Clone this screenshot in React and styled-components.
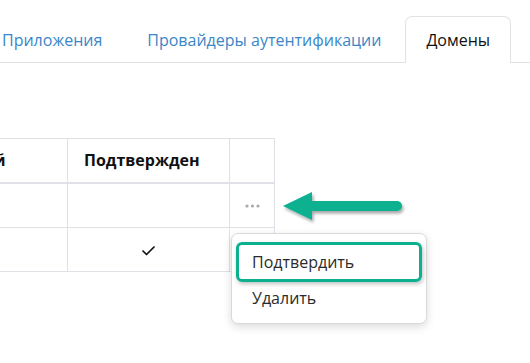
import React from "react";
import styled, { createGlobalStyle } from "styled-components";

const GlobalStyle = createGlobalStyle`
  html, body {
    margin: 0;
    padding: 0;
    background: #fff;
  }
  body {
    font-family: "Open Sans", "Noto Sans", sans-serif;
    color: #1a1a1a;
  }
`;

const Page = styled.div`
  position: relative;
  width: 530px;
  height: 363px;
  overflow: hidden;
`;

const TabBar = styled.div`
  display: flex;
  align-items: flex-end;
  gap: 3px;
  height: 63px;
  margin-left: -19px;
  border-bottom: 1px solid #e2e2e2;
  box-sizing: border-box;
`;

const Tab = styled.div`
  box-sizing: border-box;
  height: ${(p) => (p.$active ? "47px" : "46px")};
  margin-bottom: ${(p) => (p.$active ? "-1px" : "0")};
  padding: 0 20px;
  display: flex;
  align-items: center;
  font-size: 16px;
  white-space: nowrap;
  color: ${(p) => (p.$active ? "#111" : "#3a86c8")};
  background: #fff;
  border: 1px solid ${(p) => (p.$active ? "#e2e2e2" : "transparent")};
  border-bottom: none;
  border-radius: 7px 7px 0 0;
`;

const Table = styled.table`
  margin-top: 75px;
  margin-left: -95px;
  border-collapse: collapse;
  font-size: 16px;
`;

const Th = styled.th`
  box-sizing: border-box;
  width: ${(p) => p.$w}px;
  height: 44px;
  padding: 0 16px;
  text-align: left;
  font-weight: 700;
  color: #111;
  white-space: nowrap;
  border: 1px solid #dfe1e6;
  border-bottom: 2px solid #dfe1e6;
`;

const Td = styled.td`
  box-sizing: border-box;
  height: ${(p) => p.$h || 44}px;
  padding: 0 16px;
  text-align: ${(p) => (p.$center ? "center" : "left")};
  border: 1px solid #dfe1e6;
`;

const ActionCell = styled(Td)`
  padding: 0;
  text-align: center;
  line-height: 0;
`;

const Menu = styled.div`
  position: absolute;
  left: 231px;
  top: 233px;
  width: 196px;
  height: 91px;
  box-sizing: border-box;
  padding: 8px 4px;
  background: #fff;
  border: 1px solid #d9d9d9;
  border-radius: 7px;
  box-shadow: 0 3px 8px rgba(0, 0, 0, 0.14);
  display: flex;
  flex-direction: column;
`;

const MenuItem = styled.div`
  box-sizing: border-box;
  height: ${(p) => (p.$marked ? "41px" : "34px")};
  display: flex;
  align-items: center;
  padding-left: ${(p) => (p.$marked ? "13px" : "16px")};
  font-size: 16px;
  color: #2b2b2b;
  border: ${(p) => (p.$marked ? "3px solid #0bb08f" : "none")};
  border-radius: 6px;
  box-shadow: ${(p) => (p.$marked ? "1px 2px 4px rgba(0,0,0,0.25)" : "none")};
`;

const Arrow = styled.svg`
  position: absolute;
  left: 278px;
  top: 186px;
  overflow: visible;
`;

const Dots = () => (
  <svg width="15" height="4" viewBox="0 0 15 4">
    <circle cx="2" cy="2" r="1.6" fill="#a9a9a9" />
    <circle cx="7.5" cy="2" r="1.6" fill="#a9a9a9" />
    <circle cx="13" cy="2" r="1.6" fill="#a9a9a9" />
  </svg>
);

const Check = () => (
  <svg width="13" height="10" viewBox="0 0 13 10">
    <polyline
      points="1,5 4.5,8.5 12,1"
      fill="none"
      stroke="#111"
      strokeWidth="1.7"
      strokeLinecap="round"
      strokeLinejoin="round"
    />
  </svg>
);

export default function App() {
  return (
    <Page>
      <GlobalStyle />
      <TabBar>
        <Tab>Приложения</Tab>
        <Tab>Провайдеры аутентификации</Tab>
        <Tab $active>Домены</Tab>
      </TabBar>

      <Table>
        <thead>
          <tr>
            <Th $w={162}>Основной</Th>
            <Th $w={162}>Подтвержден</Th>
            <Th $w={45}></Th>
          </tr>
        </thead>
        <tbody>
          <tr>
            <Td $h={45}></Td>
            <Td $h={45}></Td>
            <ActionCell $h={45}>
              <Dots />
            </ActionCell>
          </tr>
          <tr>
            <Td></Td>
            <Td $center>
              <Check />
            </Td>
            <ActionCell></ActionCell>
          </tr>
        </tbody>
      </Table>

      <Arrow width="130" height="40" viewBox="0 0 130 40">
        <defs>
          <filter id="sh" x="-10%" y="-30%" width="130%" height="180%">
            <feDropShadow dx="1.5" dy="2.5" stdDeviation="1.5" floodColor="#000" floodOpacity="0.35" />
          </filter>
        </defs>
        <g filter="url(#sh)" fill="#0bb08f">
          <polygon points="5,20 34,6 34,34" />
          <rect x="30" y="15" width="94" height="10" rx="5" />
        </g>
      </Arrow>

      <Menu>
        <MenuItem $marked>Подтвердить</MenuItem>
        <MenuItem>Удалить</MenuItem>
      </Menu>
    </Page>
  );
}
